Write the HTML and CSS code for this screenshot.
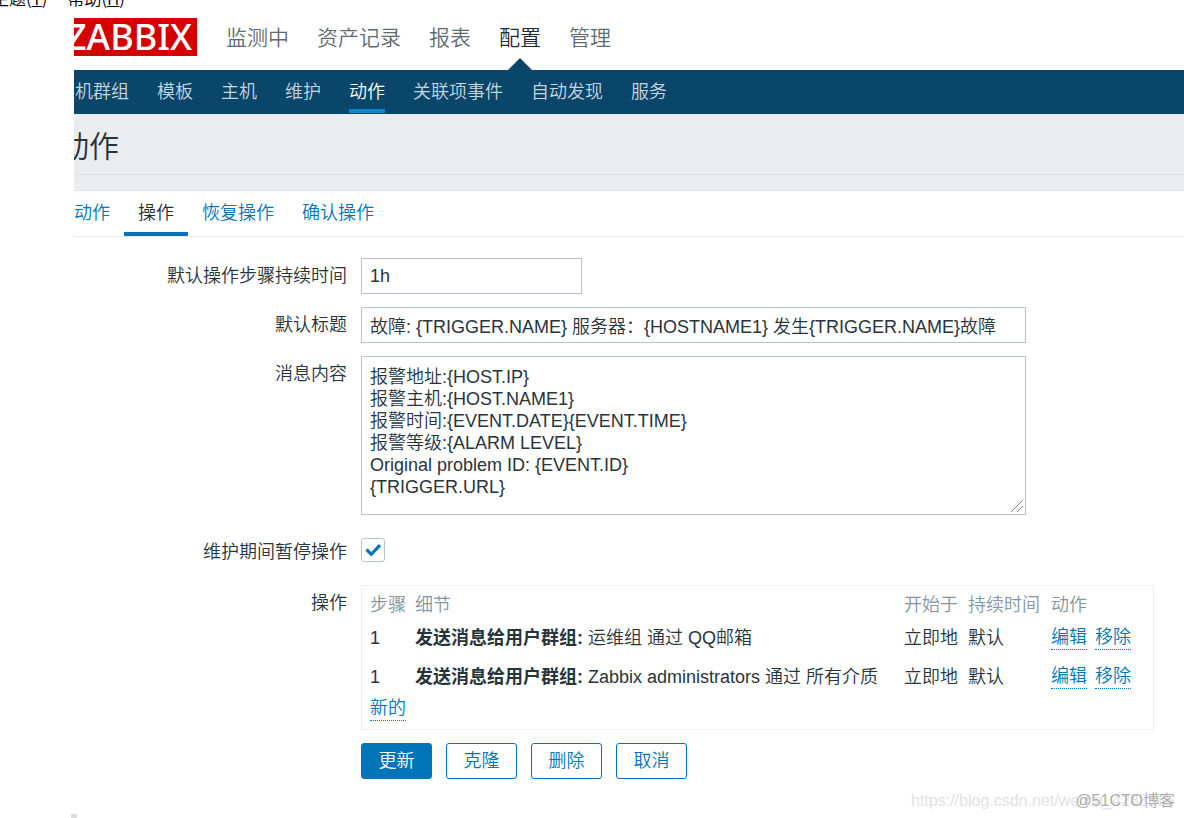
FILE: index.html
```html
<!DOCTYPE html>
<html lang="zh-CN">
<head>
<meta charset="utf-8">
<title>动作 - ZABBIX</title>
<link rel="stylesheet" href="styles.css">
</head>
<body>
<div class="menubar"><span>主题(<u>T</u>)</span><span>帮助(<u>H</u>)</span></div>
<div class="page">
  <header class="top">
    <a class="logo" href="#">ZABBIX</a>
    <nav class="main-nav">
      <a href="#">监测中</a>
      <a href="#">资产记录</a>
      <a href="#">报表</a>
      <a href="#" class="selected">配置</a>
      <a href="#">管理</a>
    </nav>
  </header>
  <nav class="sub-nav">
    <a href="#">主机群组</a>
    <a href="#">模板</a>
    <a href="#">主机</a>
    <a href="#">维护</a>
    <a href="#" class="selected">动作</a>
    <a href="#">关联项事件</a>
    <a href="#">自动发现</a>
    <a href="#">服务</a>
  </nav>
  <div class="title-bar"><h1>动作</h1></div>
  <nav class="tabs">
    <a href="#">动作</a>
    <a href="#" class="selected">操作</a>
    <a href="#">恢复操作</a>
    <a href="#">确认操作</a>
  </nav>
  <form class="form">
    <label class="label" for="period">默认操作步骤持续时间</label>
    <div class="field"><input class="text short" id="period" type="text" value="1h"></div>

    <label class="label" for="subject">默认标题</label>
    <div class="field"><input class="text" id="subject" type="text" value="故障: {TRIGGER.NAME} 服务器：{HOSTNAME1} 发生{TRIGGER.NAME}故障"></div>

    <label class="label" for="message">消息内容</label>
    <div class="field message-field">
      <textarea class="text message" id="message">报警地址:{HOST.IP}
报警主机:{HOST.NAME1}
报警时间:{EVENT.DATE}{EVENT.TIME}
报警等级:{ALARM LEVEL}
Original problem ID: {EVENT.ID}
{TRIGGER.URL}</textarea>
      <svg class="grip" viewBox="0 0 14 14" aria-hidden="true"><path d="M1 13L13 1M7 13l6-6" fill="none" stroke="#8a8a8a"/></svg>
    </div>

    <label class="label check-label" for="pause">维护期间暂停操作</label>
    <div class="field check-field">
      <input class="check" id="pause" type="checkbox" checked>
      <svg class="tick" viewBox="0 0 24 24" aria-hidden="true"><path d="M5.5 11.5l4.8 4.8 8.7-9.2" fill="none" stroke="#0275b8" stroke-width="3.2"/></svg>
    </div>

    <span class="label ops-label">操作</span>
    <div class="ops">
      <table>
        <thead>
          <tr><th class="c-step">步骤</th><th>细节</th><th class="c-start">开始于</th><th class="c-dur">持续时间</th><th class="c-act">动作</th></tr>
        </thead>
        <tbody>
          <tr><td>1</td><td><b>发送消息给用户群组:</b> 运维组 通过 QQ邮箱</td><td>立即地</td><td>默认</td><td><div class="links"><a href="#">编辑</a><a href="#">移除</a></div></td></tr>
          <tr><td>1</td><td><b>发送消息给用户群组:</b> Zabbix administrators 通过 所有介质</td><td>立即地</td><td>默认</td><td><div class="links"><a href="#">编辑</a><a href="#">移除</a></div></td></tr>
        </tbody>
      </table>
      <div class="links"><a href="#">新的</a></div>
    </div>

    <div class="buttons">
      <button type="submit" class="primary">更新</button>
      <button type="button">克隆</button>
      <button type="button">删除</button>
      <button type="button">取消</button>
    </div>
  </form>
</div>
<div class="scroll-mark"></div>
<div class="watermark url">https://blog.csdn.net/weixin_42883855</div>
<div class="watermark site">@51CTO博客</div>
</body>
</html>
```
FILE: styles.css
```css
* { box-sizing: border-box; }

body {
  margin: 0;
  background: #fff;
  color: #27343b;
  font: 350 18px/24px "Liberation Sans", "Noto Sans CJK SC", sans-serif;
  position: relative;
  overflow: hidden;
}

a { color: #0275b8; text-decoration: none; }
b { font-weight: 700; }

.menubar {
  display: flex;
  align-items: flex-end;
  gap: 20px;
  height: 8px;
  margin-left: -8px;
  overflow: hidden;
  color: #000;
  font: 350 17px/20px "Noto Sans CJK SC", sans-serif;
}

.page { margin-left: 74px; overflow: hidden; }

.top {
  display: flex;
  align-items: center;
  gap: 29px;
  height: 62px;
}

.logo {
  display: flex;
  justify-content: flex-end;
  width: 123px;
  height: 38px;
  margin-bottom: 4px;
  padding-right: 5px;
  overflow: hidden;
  background: #d40000;
  color: #fff;
  font: 500 36px/38px "Noto Sans", "Open Sans", sans-serif;
}

.main-nav { display: flex; gap: 28px; height: 62px; }
.main-nav a {
  position: relative;
  padding-top: 18px;
  color: #5f6b73;
  font-size: 21px;
}
.main-nav .selected { color: #1f2c33; }
.main-nav .selected::after {
  content: "";
  position: absolute;
  left: 50%;
  bottom: 0;
  margin-left: -12px;
  border: 12px solid transparent;
  border-top: 0;
  border-bottom-color: #0a466a;
}

.sub-nav {
  display: flex;
  gap: 28px;
  height: 44px;
  margin-left: -17px;
  background: #0a466a;
}
.sub-nav a {
  padding: 10px 0 5px;
  border-bottom: 4px solid transparent;
  color: #c6d6e0;
  height: 43px;
}
.sub-nav .selected { color: #fff; border-color: #0f86cd; }

.title-bar {
  height: 77px;
  padding-bottom: 15px;
  background: #e9edf0;
  border-bottom: 1px solid #dfe4e7;
}
h1 {
  margin: 0 0 0 -15px;
  height: 61px;
  padding-top: 13px;
  border-bottom: 1px solid #dbe1e5;
  font-size: 30px;
  line-height: 40px;
  font-weight: 350;
}

.tabs {
  display: flex;
  height: 46px;
  margin-left: -14px;
  border-bottom: 1px solid #ebeef0;
}
.tabs a { padding: 10px 14px 0; border-bottom: 4px solid transparent; }
.tabs .selected { color: #1f2c33; border-color: #0275b8; }

.form {
  display: grid;
  grid-template-columns: 273px minmax(0, 1fr);
  column-gap: 14px;
  row-gap: 13px;
  padding: 21px 30px 0 0;
}
.label { padding-top: 6px; text-align: right; }
.field { display: flex; }

.text {
  width: 100%;
  max-width: 665px;
  height: 36px;
  padding: 0 8px;
  border: 1px solid #b6c4cb;
  border-radius: 0;
  background: #fff;
  color: #27343b;
  font: inherit;
}
.short { max-width: 221px; }
.message-field { position: relative; max-width: 665px; }
.message {
  height: 159px;
  padding: 9px 8px 0;
  line-height: 22px;
  resize: none;
}
.grip {
  position: absolute;
  right: 2px;
  bottom: 2px;
  width: 14px;
  height: 14px;
  pointer-events: none;
}

.check-label { padding-top: 12px; }
.check-field { position: relative; padding: 10px 0; }
.check {
  appearance: none;
  width: 24px;
  height: 24px;
  margin: 0;
  border: 1px solid #b6c4cb;
  border-radius: 3px;
  background: #fff;
}
.tick {
  position: absolute;
  left: 0;
  top: 10px;
  width: 24px;
  height: 24px;
  pointer-events: none;
}

.ops {
  padding: 0 8px 8px;
  border: 1px solid #edf0f1;
}
table { width: 100%; border-collapse: collapse; table-layout: fixed; }
th {
  padding: 7px 0 2px;
  color: #8496a1;
  font-weight: 350;
  text-align: left;
}
td { padding: 7px 0 8px; white-space: nowrap; }
.c-step { width: 45px; }
.c-start { width: 64px; }
.c-dur { width: 83px; }
.c-act { width: 94px; }
.links { display: flex; gap: 8px; }
.links a { line-height: 23px; border-bottom: 1px dotted #0275b8; }

.buttons { grid-column: 2; display: flex; gap: 14px; }
button {
  width: 71px;
  height: 36px;
  padding: 0;
  border: 1px solid #0275b8;
  border-radius: 3px;
  background: #fff;
  color: #0275b8;
  font: inherit;
}
.primary { background: #0275b8; color: #fff; }

.scroll-mark {
  width: 6px;
  height: 4px;
  margin: 35px 0 0 71px;
  background: #dedede;
}

.watermark {
  position: absolute;
  bottom: 5px;
  white-space: nowrap;
  font-size: 16px;
}
.url { right: 10px; width: 263px; overflow: hidden; color: #e2e2e2; }
.site { right: 9px; color: #adadad; }
```
